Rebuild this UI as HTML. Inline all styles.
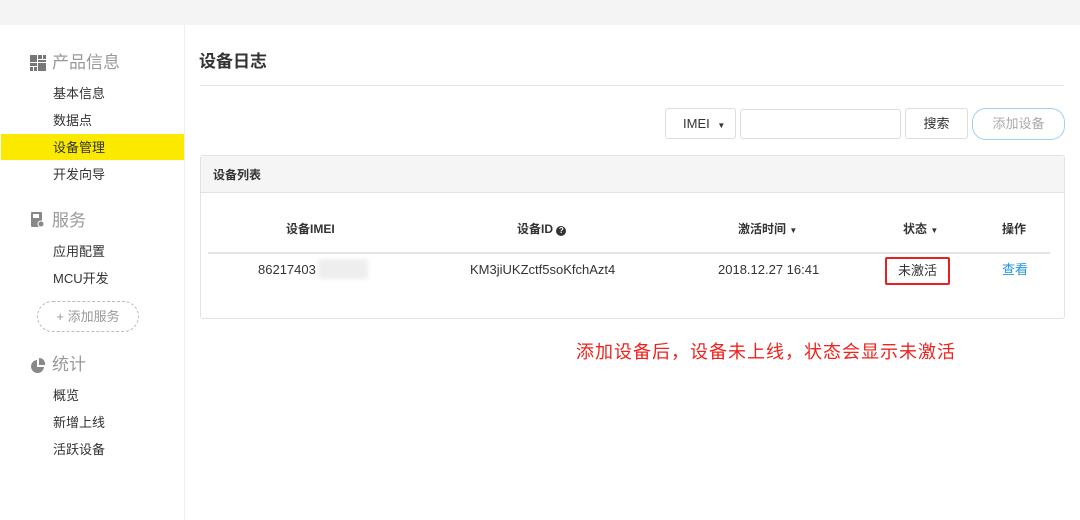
<!DOCTYPE html>
<html><head><meta charset="utf-8"><style>
*{margin:0;padding:0;box-sizing:border-box}
body{width:1080px;height:520px;background:#fff;font-family:"Liberation Sans","Noto Sans CJK SC",sans-serif;position:relative;overflow:hidden;color:#333}
.top{position:absolute;left:0;top:0;width:1080px;height:25px;background:#f4f4f4}
.side{position:absolute;left:0;top:25px;width:185px;height:495px;border-right:1px solid #eee;background:#fff}
.a{position:absolute;font-size:13px;color:#333;line-height:16px}
.h{position:absolute;font-size:17px;color:#999;left:52px;line-height:20px}
.ab{position:absolute;font-size:13px;line-height:16px}
</style></head><body>
<div class="top"></div>
<div class="side"></div>
<svg style="position:absolute;left:30px;top:55px" width="16" height="16"><rect x="0" y="0" width="7" height="7" fill="#777"/><rect x="8" y="0" width="4" height="4" fill="#777"/><rect x="13" y="0" width="3" height="4" fill="#777"/><rect x="8" y="5" width="8" height="2" fill="#777"/><rect x="0" y="8" width="7" height="3" fill="#777"/><rect x="0" y="12" width="3" height="4" fill="#777"/><rect x="4" y="12" width="3" height="4" fill="#777"/><rect x="8" y="8" width="8" height="8" fill="#777"/></svg>
<div class="h" style="top:53px">产品信息</div>
<div class="a" style="left:53px;top:86px">基本信息</div>
<div class="a" style="left:53px;top:113px">数据点</div>
<div style="position:absolute;left:1px;top:134px;width:183px;height:26px;background:#fbea00"></div>
<div class="a" style="left:53px;top:140px">设备管理</div>
<div class="a" style="left:53px;top:167px">开发向导</div>
<svg style="position:absolute;left:31px;top:212px" width="14" height="16"><rect x="0" y="0" width="11" height="15" rx="1" fill="#888"/><rect x="2" y="2" width="6" height="4" fill="#fff"/><circle cx="10" cy="12" r="3.5" fill="#fff"/><circle cx="10" cy="12" r="2.5" fill="#888"/></svg>
<div class="h" style="top:211px">服务</div>
<div class="a" style="left:53px;top:244px">应用配置</div>
<div class="a" style="left:53px;top:271px">MCU开发</div>
<div style="position:absolute;left:37px;top:301px;width:102px;height:31px;border:1px dashed #bbb;border-radius:16px;font-size:13px;color:#999;text-align:center;line-height:29px">+ 添加服务</div>
<svg style="position:absolute;left:30px;top:357px" width="16" height="16"><path d="M7 3 A6.5 6.5 0 1 0 14 10 L7 10 Z" fill="#888"/><path d="M9 1 L9 8 L15 8 A6 6 0 0 0 9 1Z" fill="#888"/></svg>
<div class="h" style="top:355px">统计</div>
<div class="a" style="left:53px;top:388px">概览</div>
<div class="a" style="left:53px;top:415px">新增上线</div>
<div class="a" style="left:53px;top:442px">活跃设备</div>

<div style="position:absolute;left:199px;top:52px;font-size:17px;font-weight:bold;color:#333;line-height:20px">设备日志</div>
<div style="position:absolute;left:200px;top:85px;width:864px;height:1px;background:#e5e5e5"></div>

<div style="position:absolute;left:665px;top:108px;width:71px;height:31px;border:1px solid #ddd;border-radius:3px;font-size:13px;line-height:29px;padding-left:17px">IMEI <span style="font-size:8px;margin-left:4px">▼</span></div>
<div style="position:absolute;left:740px;top:109px;width:161px;height:30px;border:1px solid #ddd;border-radius:3px"></div>
<div style="position:absolute;left:905px;top:108px;width:63px;height:31px;border:1px solid #ddd;border-radius:3px;font-size:13px;line-height:29px;text-align:center">搜索</div>
<div style="position:absolute;left:972px;top:108px;width:93px;height:32px;border:1px solid #9fd0ee;border-radius:14px;font-size:13px;line-height:30px;text-align:center;color:#aaa">添加设备</div>

<div style="position:absolute;left:200px;top:155px;width:865px;height:164px;border:1px solid #e3e3e3;border-radius:3px"></div>
<div style="position:absolute;left:201px;top:156px;width:863px;height:37px;background:#f5f5f5;border-bottom:1px solid #e3e3e3"></div>
<div style="position:absolute;left:213px;top:167px;font-size:12px;font-weight:bold;line-height:16px">设备列表</div>

<div class="ab" style="left:286px;top:221px;font-weight:bold;font-size:12px">设备IMEI</div>
<div class="ab" style="left:517px;top:221px;font-weight:bold;font-size:12px">设备ID <span style="display:inline-block;width:10px;height:10px;border-radius:50%;background:#333;color:#fff;font-size:8px;line-height:10px;text-align:center">?</span></div>
<div class="ab" style="left:738px;top:221px;font-weight:bold;font-size:12px">激活时间 <span style="font-size:8px">▼</span></div>
<div class="ab" style="left:903px;top:221px;font-weight:bold;font-size:12px">状态 <span style="font-size:8px">▼</span></div>
<div class="ab" style="left:1002px;top:221px;font-weight:bold;font-size:12px">操作</div>
<div style="position:absolute;left:208px;top:252px;width:842px;height:2px;background:#e3e3e3"></div>
<div class="ab" style="left:258px;top:262px">86217403</div>
<div style="position:absolute;left:318px;top:259px;width:50px;height:20px;background:#eee;filter:blur(2px)"></div>
<div class="ab" style="left:470px;top:262px">KM3jiUKZctf5soKfchAzt4</div>
<div class="ab" style="left:718px;top:262px">2018.12.27 16:41</div>
<div style="position:absolute;left:885px;top:257px;width:65px;height:28px;border:2px solid #e62020;border-radius:2px;font-size:13px;line-height:24px;text-align:center">未激活</div>
<div class="ab" style="left:1002px;top:262px;color:#2196d8">查看</div>

<div style="position:absolute;left:576px;top:341px;font-size:18px;letter-spacing:1px;color:#f0221d;line-height:22px;white-space:nowrap">添加设备后，设备未上线，状态会显示未激活</div>
</body></html>
